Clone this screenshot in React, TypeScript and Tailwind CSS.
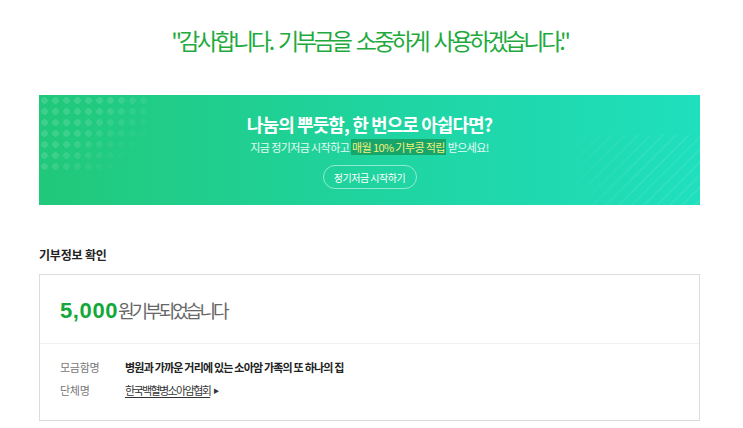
import { ReactNode } from 'react';

type InfoRow = {
  label: string;
  value: ReactNode;
};

const rows: InfoRow[] = [
  {
    label: '모금함명',
    value: (
      <span className="font-bold text-[#222] tracking-[-0.8px]">
        병원과 가까운 거리에 있는 소아암 가족의 또 하나의 집
      </span>
    ),
  },
  {
    label: '단체명',
    value: (
      <span className="flex items-center gap-[3px] text-[#333]">
        <span className="underline underline-offset-2 tracking-[-1.6px]">한국백혈병소아암협회</span>
        <span className="text-[6px] leading-none">▶</span>
      </span>
    ),
  },
];

export default function App() {
  return (
    <div className="w-[743px] h-[428px] bg-white overflow-hidden font-['Noto_Sans_CJK_KR','Noto_Sans',sans-serif]">
      <div className="ml-[39px] w-[661px]">
        {/* thank-you headline */}
        <h1 className="pt-[26px] h-[95px] text-center text-[23px] leading-[28px] tracking-[-3.2px] [word-spacing:4px] text-[#1faa3e]">
          "감사합니다. 기부금을 소중하게 사용하겠습니다."
        </h1>

        {/* regular giving banner */}
        <div className="relative h-[110px] overflow-hidden bg-[linear-gradient(to_right,#21c87a,#1fd6a6_60%,#1fdfbd)]">
          <div className="absolute left-0 top-0 w-[110px] h-[75px] bg-[radial-gradient(circle,rgba(255,255,255,0.13)_3px,transparent_3.6px)] bg-[size:11px_11px] [mask-image:linear-gradient(135deg,black_40%,transparent_85%)]" />
          <div className="absolute right-0 top-[40px] w-[140px] h-[70px] bg-[repeating-linear-gradient(135deg,rgba(255,255,255,0.07)_0px,rgba(255,255,255,0.07)_2px,transparent_2px,transparent_9px)] [mask-image:linear-gradient(to_right,transparent,black_60%)]" />
          <div className="relative flex flex-col items-center pt-[18px]">
            <p className="text-[18px] leading-[22px] font-bold text-white tracking-[-0.9px]">
              나눔의 뿌듯함, 한 번으로 아쉽다면?
            </p>
            <p className="mt-[5px] text-[11px] leading-[14px] text-white/90 tracking-[-0.6px]">
              지금 정기저금 시작하고{' '}
              <span className="bg-[#17a56a] text-[#f5f07a] px-[1px]">매월 10% 기부콩 적립</span> 받으세요!
            </p>
            <button className="mt-[11px] w-[94px] h-[24px] rounded-full border border-white/50 text-[10px] text-white tracking-[-0.5px]">
              정기저금 시작하기
            </button>
          </div>
        </div>

        {/* donation summary */}
        <h2 className="mt-[42px] text-[12px] leading-[16px] font-bold text-[#222] tracking-[-0.2px]">기부정보 확인</h2>
        <div className="mt-[11px] h-[147px] border border-[#dcdcdc]">
          <div className="h-[68px] flex items-center pl-[20px] pt-[2px]">
            <span className="text-[22px] font-bold text-[#14a83a] tracking-[0.6px] font-['Liberation_Sans',sans-serif]">
              5,000
            </span>
            <span className="text-[18px] text-[#666] tracking-[-3px]">원기부되었습니다</span>
          </div>
          <div className="border-t border-[#efefef] pt-[16px] pl-[20px] flex flex-col gap-[8px]">
            {rows.map((r) => (
              <div key={r.label} className="flex items-center text-[11px] leading-[15px] tracking-[-0.3px]">
                <span className="w-[65px] text-[#777]">{r.label}</span>
                {r.value}
              </div>
            ))}
          </div>
        </div>
      </div>
    </div>
  );
}
